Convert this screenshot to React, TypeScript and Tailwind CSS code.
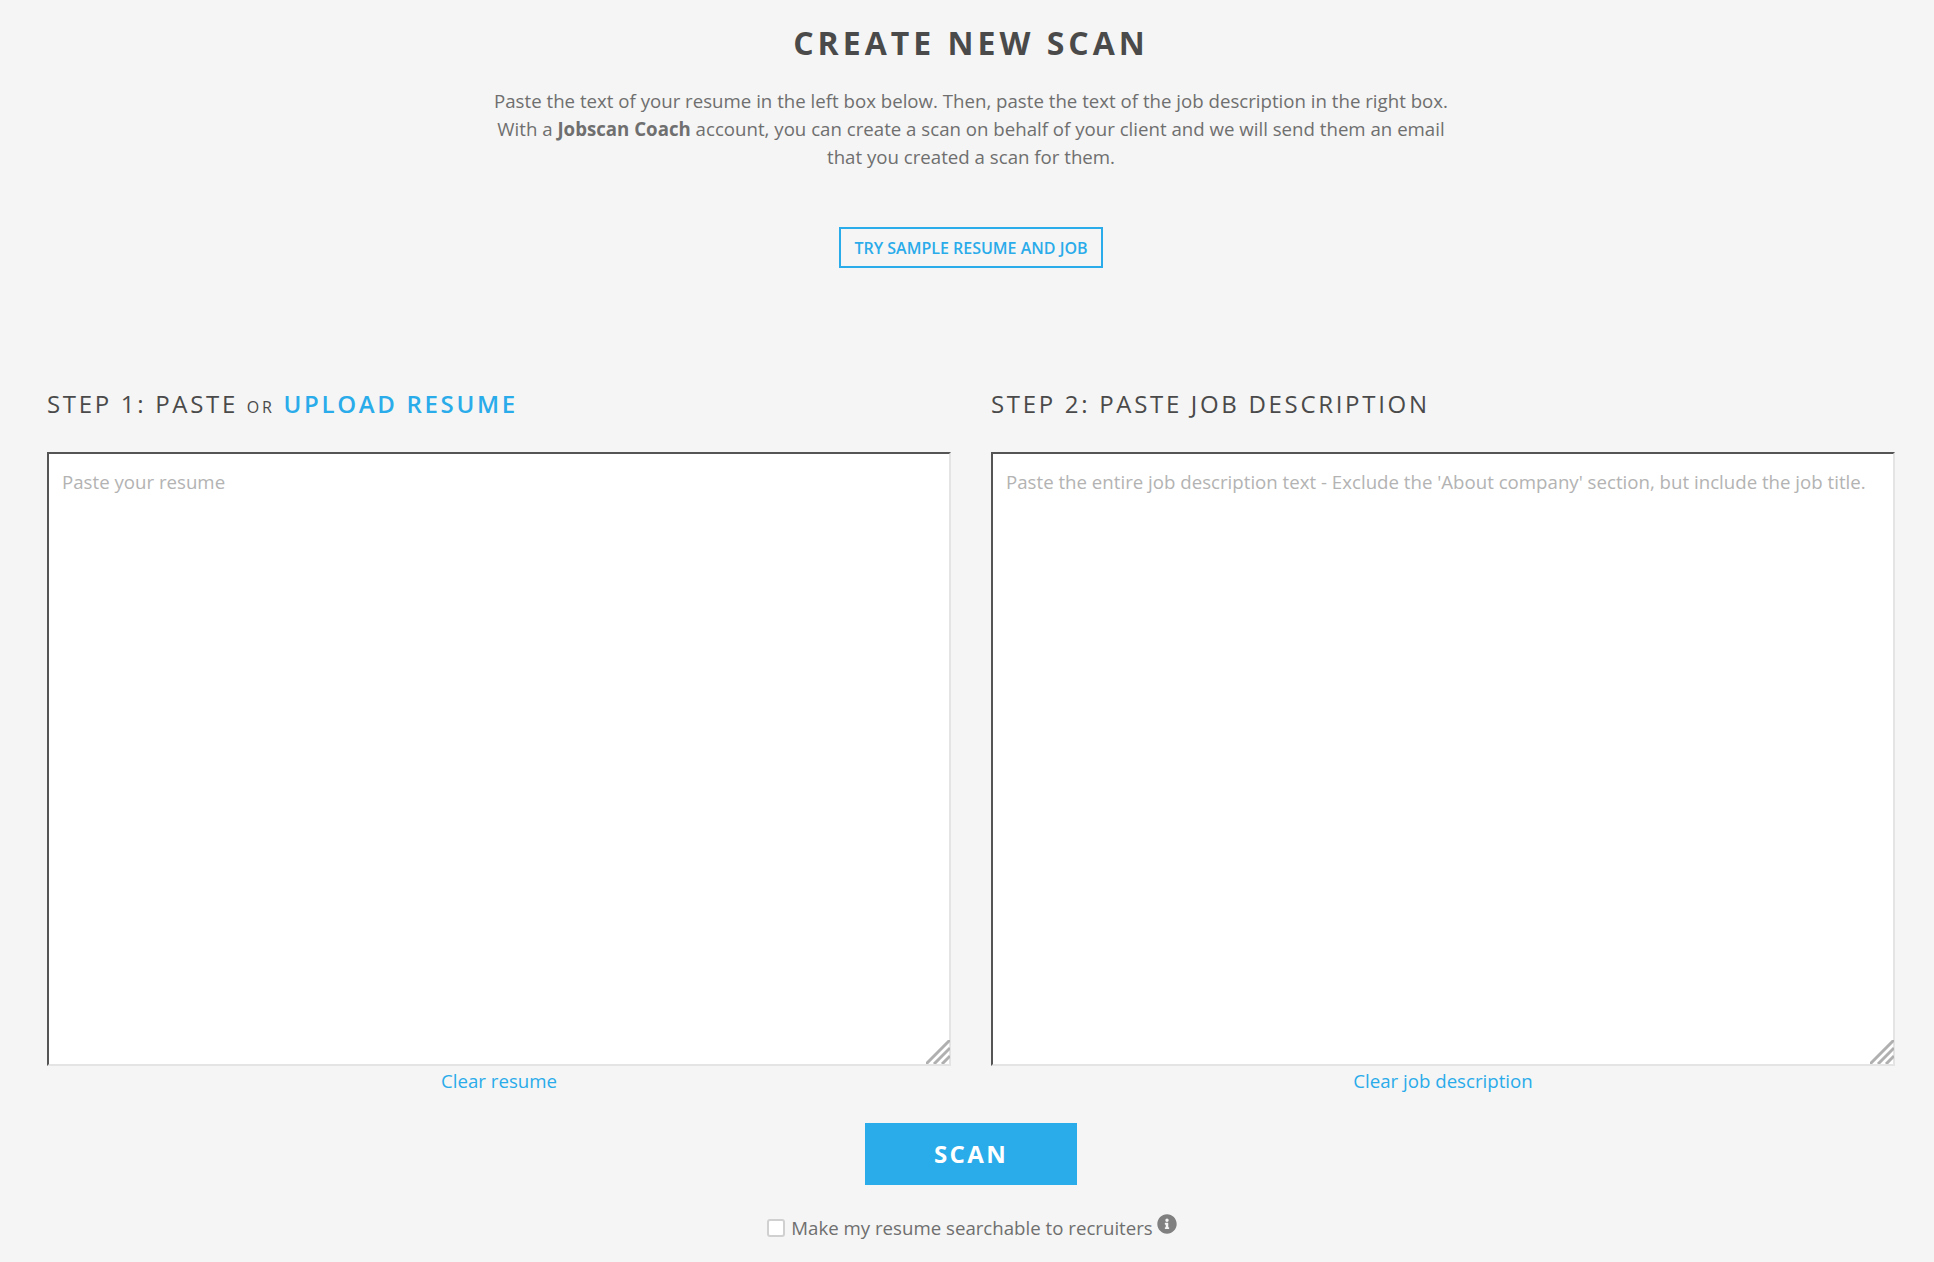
import { FaInfoCircle } from 'react-icons/fa';

function ResizeGrip() {
  return (
    <svg className="absolute right-[1px] bottom-[2px] pointer-events-none" width="24" height="24" viewBox="0 0 24 24">
      <path d="M0 24 L24 0 M8 24 L24 8 M16 24 L24 16" stroke="#b0b0b0" strokeWidth="3" fill="none" />
    </svg>
  );
}

function ScanBox({ placeholder, clearLabel }: { placeholder: string; clearLabel: string }) {
  return (
    <div>
      <div className="relative h-[614px]">
        <textarea
          placeholder={placeholder}
          className="block w-full h-full resize-none bg-white border-2 border-t-[#555555] border-l-[#555555] border-r-[#e4e4e4] border-b-[#e4e4e4] px-[13px] pt-[14px] pb-[12px] text-[18.67px] leading-[28px] text-[#555555] placeholder:text-[#b3b3b3] outline-none"
        />
        <ResizeGrip />
      </div>
      <div className="text-center mt-[1px]">
        <a className="text-[18.67px] leading-[28px] text-[#2aabea]">{clearLabel}</a>
      </div>
    </div>
  );
}

export default function App() {
  return (
    <div className="min-h-[1262px] bg-[#f5f5f5] pl-[47px] pr-[39px] pt-[20px] overflow-hidden font-['Open_Sans',sans-serif]">
      <div className="text-center">
        <h1 className="text-[32px] leading-[46px] font-bold tracking-[0.125em] text-[#4a4a4a]">CREATE NEW SCAN</h1>
        <p className="mt-[21px] text-[18.67px] leading-[28px] text-[#6f6f6f]">
          Paste the text of your resume in the left box below. Then, paste the text of the job description in the right box.
          <br />
          With a <b className="font-bold">Jobscan Coach</b> account, you can create a scan on behalf of your client and we will send them an email
          <br />
          that you created a scan for them.
        </p>
        <button className="mt-[56px] h-[41px] w-[264px] border-2 border-[#2aabea] text-[16px] font-semibold text-[#2aabea]">
          TRY SAMPLE RESUME AND JOB
        </button>
      </div>

      <div className="mt-[119px] grid grid-cols-2 gap-[40px]">
        <div>
          <h2 className="mb-[31px] h-[34px] text-[24px] leading-[34px] tracking-[0.112em] text-[#4a4a4a]">
            STEP 1: PASTE <span className="text-[16px] leading-none">OR</span>{' '}
            <a className="font-semibold text-[#2aabea]">UPLOAD RESUME</a>
          </h2>
          <ScanBox placeholder="Paste your resume" clearLabel="Clear resume" />
        </div>
        <div>
          <h2 className="mb-[31px] h-[34px] text-[24px] leading-[34px] tracking-[0.112em] text-[#4a4a4a]">STEP 2: PASTE JOB DESCRIPTION</h2>
          <ScanBox
            placeholder="Paste the entire job description text - Exclude the 'About company' section, but include the job title."
            clearLabel="Clear job description"
          />
        </div>
      </div>

      <div className="mt-[28px] flex flex-col items-center">
        <button className="h-[62px] w-[212px] bg-[#2aabea] text-[24px] font-bold tracking-[0.1em] text-white">SCAN</button>
        <label className="mt-[29px] pl-[2px] flex items-center text-[18.67px] leading-[28px] text-[#6f6f6f]">
          <input
            type="checkbox"
            className="mr-[6px] h-[18px] w-[18px] appearance-none rounded-[3px] border-2 border-[#d0d0d0] bg-white"
          />
          Make my resume searchable to recruiters
          <FaInfoCircle className="ml-[4px] mb-[8px] text-[#808080]" size={20} />
        </label>
      </div>
    </div>
  );
}
